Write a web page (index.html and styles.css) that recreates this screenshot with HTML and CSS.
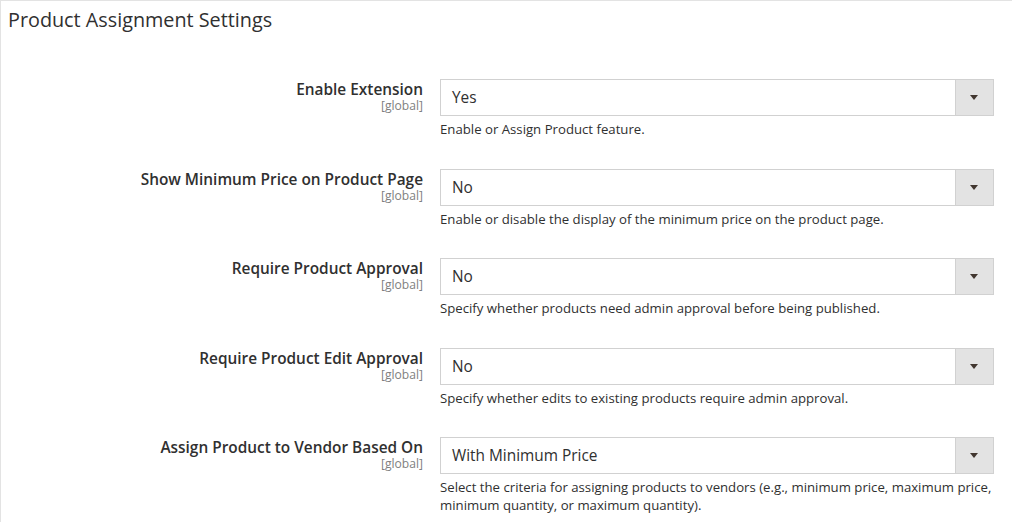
FILE: index.html
```html
<!DOCTYPE html>
<html lang="en">
<head>
  <meta charset="UTF-8">
  <meta name="viewport" content="width=device-width, initial-scale=1.0">
  <title>Product Assignment Settings</title>
  <link rel="stylesheet" href="styles.css">
</head>
<body>
  <section class="panel">
    <h2 class="panel-title">Product Assignment Settings</h2>

    <div class="fieldset">
      <div class="field">
        <div class="field-label">
          <span class="label-text">Enable Extension</span>
          <span class="scope">[global]</span>
        </div>
        <div class="field-control">
          <div class="select">
            <span class="select-value">Yes</span>
            <span class="select-arrow"></span>
          </div>
          <p class="note">Enable or Assign Product feature.</p>
        </div>
      </div>

      <div class="field">
        <div class="field-label">
          <span class="label-text">Show Minimum Price on Product Page</span>
          <span class="scope">[global]</span>
        </div>
        <div class="field-control">
          <div class="select">
            <span class="select-value">No</span>
            <span class="select-arrow"></span>
          </div>
          <p class="note">Enable or disable the display of the minimum price on the product page.</p>
        </div>
      </div>

      <div class="field">
        <div class="field-label">
          <span class="label-text">Require Product Approval</span>
          <span class="scope">[global]</span>
        </div>
        <div class="field-control">
          <div class="select">
            <span class="select-value">No</span>
            <span class="select-arrow"></span>
          </div>
          <p class="note">Specify whether products need admin approval before being published.</p>
        </div>
      </div>

      <div class="field">
        <div class="field-label">
          <span class="label-text">Require Product Edit Approval</span>
          <span class="scope">[global]</span>
        </div>
        <div class="field-control">
          <div class="select">
            <span class="select-value">No</span>
            <span class="select-arrow"></span>
          </div>
          <p class="note">Specify whether edits to existing products require admin approval.</p>
        </div>
      </div>

      <div class="field">
        <div class="field-label">
          <span class="label-text">Assign Product to Vendor Based On</span>
          <span class="scope">[global]</span>
        </div>
        <div class="field-control">
          <div class="select">
            <span class="select-value">With Minimum Price</span>
            <span class="select-arrow"></span>
          </div>
          <p class="note">Select the criteria for assigning products to vendors (e.g., minimum price, maximum price, minimum quantity, or maximum quantity).</p>
        </div>
      </div>
    </div>
  </section>
</body>
</html>
```

FILE: styles.css
```css
body {
  margin: 0;
  padding: 0;
  font-family: 'Open Sans', 'Liberation Sans', sans-serif;
  background: #fff;
  color: #303030;
}

.panel {
  border-top: 1px solid #e3e3e3;
  border-left: 1px solid #e3e3e3;
  min-height: 100vh;
  box-sizing: border-box;
}

.panel-title {
  margin: 0;
  padding: 5px 7px 0;
  font-size: 19.8px;
  font-weight: 400;
  line-height: 27px;
  color: #303030;
}

.fieldset {
  padding-top: 46px;
}

.field {
  display: grid;
  grid-template-columns: 422px 554px;
  column-gap: 17px;
  margin-bottom: 30.5px;
}

.field-label {
  display: flex;
  flex-direction: column;
  align-items: flex-end;
  text-align: right;
  padding-top: 1px;
}

.label-text {
  font-size: 15.4px;
  font-weight: 600;
  line-height: 19px;
  color: #303030;
}

.scope {
  font-size: 12.1px;
  line-height: 14px;
  color: #808080;
}

.select {
  display: flex;
  height: 37px;
  border: 1px solid #d1d1d1;
  box-sizing: border-box;
  background: #fff;
}

.select-value {
  flex: 1;
  padding-left: 11px;
  font-size: 15.4px;
  line-height: 35px;
  color: #303030;
}

.select-arrow {
  width: 38px;
  box-sizing: border-box;
  border-left: 1px solid #d1d1d1;
  background: #e3e3e3;
  position: relative;
}

.select-arrow::after {
  content: '';
  position: absolute;
  left: 14px;
  top: 15px;
  border-left: 4px solid transparent;
  border-right: 4px solid transparent;
  border-top: 5px solid #41362f;
}

.note {
  margin: 4px 0 0;
  font-size: 13.2px;
  line-height: 18px;
  color: #303030;
}
```
